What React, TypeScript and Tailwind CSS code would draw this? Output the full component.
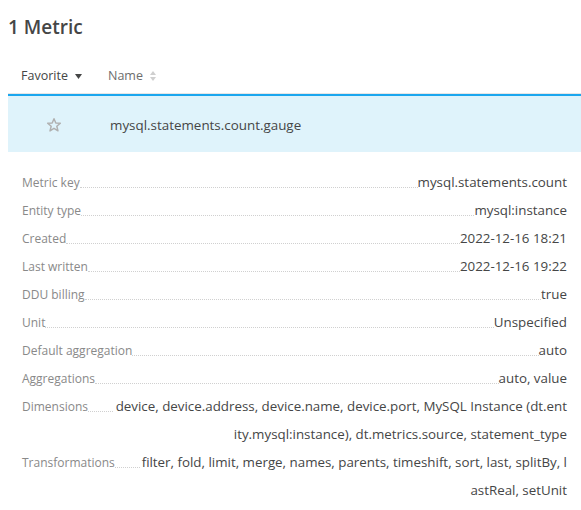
import React from "react"

const rows: [string, string][] = [
    ["Metric key", "mysql.statements.count"],
    ["Entity type", "mysql:instance"],
    ["Created", "2022-12-16 18:21"],
    ["Last written", "2022-12-16 19:22"],
    ["DDU billing", "true"],
    ["Unit", "Unspecified"],
    ["Default aggregation", "auto"],
    ["Aggregations", "auto, value"],
    ["Dimensions", "device, device.address, device.name, device.port, MySQL Instance (dt.entity.mysql:instance), dt.metrics.source, statement_type"],
    ["Transformations", "filter, fold, limit, merge, names, parents, timeshift, sort, last, splitBy, lastReal, setUnit"],
]

function Star() {
    return (
        <svg width="16" height="16" viewBox="0 0 24 24" fill="none" stroke="#b0b0b0" strokeWidth="2.2" strokeLinejoin="round">
            <path d="M12 2.5 L14.7 9 L21.5 9.4 L16.2 13.8 L18 20.8 L12 17 L6 20.8 L7.8 13.8 L2.5 9.4 L9.3 9 Z" />
        </svg>
    )
}

export default function App() {
    return (
        <div className="w-[581px] h-[510px] overflow-hidden bg-white pl-2 text-[#454646]" style={{ fontFamily: '"Open Sans", "Noto Sans", sans-serif' }}>
            <h1 className="pt-[13px] text-[19px] leading-[28px] font-semibold text-[#454646]">1 Metric</h1>

            {/* テーブルヘッダー */}
            <div className="mt-[20px] flex items-center h-[33px] pb-[2px] border-b border-[#e6e6e6] text-[12.5px]">
                <div className="w-[100px] pl-[13px] flex items-center gap-[7px] text-[#454646]">
                    Favorite
                    <svg width="7" height="5" viewBox="0 0 7 5"><path d="M0 0 H7 L3.5 5 Z" fill="#454646" /></svg>
                </div>
                <div className="flex items-center gap-[7px] text-[#6d6d6d]">
                    Name
                    <svg width="6" height="10" viewBox="0 0 6 10"><path d="M0 4 L3 0 L6 4 Z M0 6 L3 10 L6 6 Z" fill="#cfcfcf" /></svg>
                </div>
            </div>
            <div className="h-[2px] bg-[#1ba6ee]" />
            <div className="h-[56px] bg-[#dff3fb] flex items-center pt-[2px]">
                <div className="w-[102px] flex justify-start pl-[38px]"><Star /></div>
                <div className="text-[13.4px] text-[#454646]">mysql.statements.count.gauge</div>
            </div>

            {/* 詳細 */}
            <div className="pt-[16px] px-[14px]">
                {rows.map(([label, value]) => (
                    <div key={label} className="flex items-start leading-[28px]">
                        <span className="shrink-0 pt-px leading-[27px] text-[12px] text-[#898989]">{label}</span>
                        <span className="flex-1 min-w-[25px] h-[20px] border-b border-dotted border-[#d0d0d0]" />
                        <span className="text-[13.35px] text-right break-all text-[#454646]">{value}</span>
                    </div>
                ))}
            </div>
        </div>
    )
}
